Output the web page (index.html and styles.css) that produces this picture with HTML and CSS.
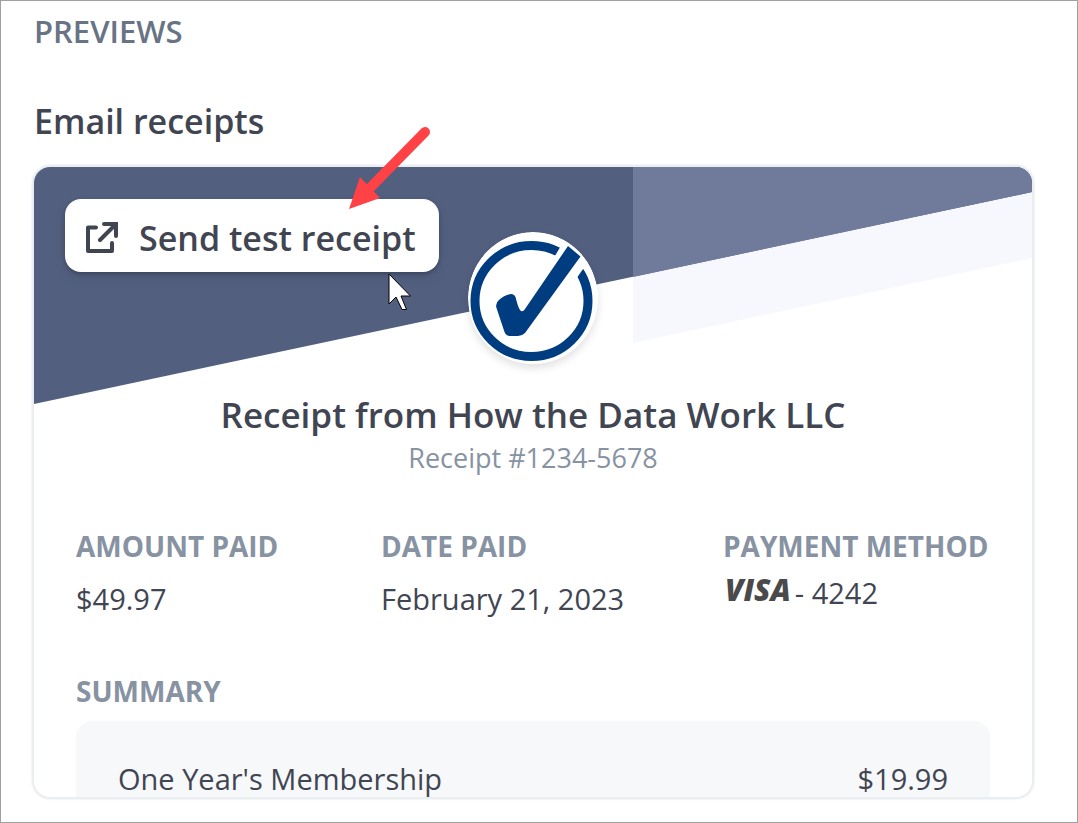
FILE: index.html
```html
<!DOCTYPE html>
<html lang="en">
<head>
    <meta charset="UTF-8">
    <title>Previews</title>
    <link rel="stylesheet" href="styles.css">
</head>
<body>
<main class="page">
    <h1 class="section-title">PREVIEWS</h1>
    <h2 class="preview-title">Email receipts</h2>
    <section class="card">
        <svg class="banner" viewBox="0 0 998 237" preserveAspectRatio="none" aria-hidden="true">
            <polygon class="stripe-light" points="599,0 998,0 998,91 599,176"/>
            <polygon class="stripe-dark" points="0,0 998,0 998,25 0,237"/>
            <polygon class="stripe-mid" points="599,0 998,0 998,25 599,110"/>
        </svg>
        <button class="send" type="button">
            <svg width="34" height="32" viewBox="0 0 34 32" fill="none" stroke="currentColor" stroke-width="4" stroke-linecap="round" aria-hidden="true">
                <path d="M11 5.500H3V29H27V21" stroke-linejoin="round"/>
                <path d="M19 2H31V14M31 2L15 18"/>
            </svg>
            Send test receipt
        </button>
        <svg class="logo" viewBox="0 0 130 132" aria-hidden="true">
            <ellipse cx="65" cy="66" rx="65" ry="66" fill="#fff"/>
            <ellipse cx="63.500" cy="69" rx="56.500" ry="55.500" fill="none" stroke="#003d80" stroke-width="9"/>
            <path d="M94 12L120 30L60 115L30 80L55 78Z" fill="#fff"/>
            <path d="M100 14L112.500 24.500L57 101Q54 104 50 104H42Q38 104 36.500 100L28.500 76Q27 71 31 68Q36 63 43 62Q46 62 47.500 65C49 70 50 76 53 79Q55 80 57 77Z" fill="#003d80"/>
        </svg>
        <h3 class="receipt-title">Receipt from How the Data Work LLC</h3>
        <p class="receipt-number">Receipt #1234-5678</p>
        <dl class="details">
            <div>
                <dt>AMOUNT PAID</dt>
                <dd>$49.97</dd>
            </div>
            <div>
                <dt>DATE PAID</dt>
                <dd>February 21, 2023</dd>
            </div>
            <div>
                <dt>PAYMENT METHOD</dt>
                <dd class="method"><span class="visa">VISA</span>- 4242</dd>
            </div>
        </dl>
        <h4 class="summary-title">SUMMARY</h4>
        <div class="summary">
            <span>One Year's Membership</span>
            <span>$19.99</span>
        </div>
    </section>
    <svg class="arrow" width="84" height="86" viewBox="0 0 84 86" aria-hidden="true">
        <path d="M77 7L20 65" stroke="#ff4245" stroke-width="10" stroke-linecap="round"/>
        <path d="M1 84L12 52L32 73Z" fill="#ff4245"/>
    </svg>
    <svg class="cursor" width="24" height="38" viewBox="0 0 24 38" aria-hidden="true">
        <path d="M1 1V31L8 24L14 36.500H18.500L13 23H22.500Z" fill="#fff" stroke="#000"/>
    </svg>
</main>
</body>
</html>
```
FILE: styles.css
```css
* {
    box-sizing: border-box;
    margin: 0;
    padding: 0;
}
body {
    font-family: "Segoe UI", "Open Sans", "Noto Sans", sans-serif;
    font-size: 29px;
    line-height: 40px;
    color: #414552;
    background: #fff;
}
.page {
    position: relative;
    min-height: 100vh;
    padding: 10px 43px 22px 31px;
    border: 1px solid #a0a0a0;
}
.section-title {
    font-size: 31px;
    font-weight: 600;
    color: #687385;
    padding-left: 2px;
}
.preview-title {
    font-size: 34px;
    font-weight: 600;
    line-height: 48px;
    margin: 46px 0 20px;
    padding-left: 2px;
}
.card {
    position: relative;
    height: 634px;
    overflow: hidden;
    display: flex;
    flex-direction: column;
    border: 2px solid #ebeef1;
    border-radius: 18px;
    box-shadow: 0 0 1px 1px #f4f6f8;
}
.card > * {
    flex-shrink: 0;
}
.banner {
    position: absolute;
    top: 0;
    left: 0;
    width: 100%;
    height: 237px;
}
.stripe-dark {
    fill: #525f7f;
}
.stripe-mid {
    fill: #707a9a;
}
.stripe-light {
    fill: #f7f8fe;
}
.send {
    position: relative;
    align-self: flex-start;
    display: flex;
    align-items: center;
    gap: 20px;
    height: 73px;
    margin: 32px 0 0 31px;
    padding: 4px 23px 0 20px;
    border: none;
    border-radius: 16px;
    font: inherit;
    font-size: 34px;
    font-weight: 600;
    color: #414552;
    background: #fff;
    box-shadow: 0 2px 4px rgba(0, 0, 0, .25), 0 6px 14px rgba(0, 0, 0, .06);
    cursor: pointer;
}
.logo {
    position: relative;
    align-self: center;
    width: 130px;
    height: 132px;
    margin-top: -40px;
    border-radius: 50%;
    box-shadow: 0 4px 8px rgba(0, 0, 0, .12);
}
.receipt-title {
    margin-top: 28px;
    font-size: 35px;
    font-weight: 600;
    line-height: 46px;
    text-align: center;
}
.receipt-number {
    font-size: 27px;
    color: #8792a2;
    text-align: center;
}
.details {
    display: grid;
    grid-template-columns: 305fr 342fr 267fr;
    margin: 48px 42px 0;
}
.details dt,
.summary-title {
    font-size: 28px;
    font-weight: 700;
    color: #8792a2;
    white-space: nowrap;
}
.details dd {
    margin-top: 13px;
}
.details .method {
    display: flex;
    margin-top: 7px;
}
.visa {
    margin: 0 4px 0 2px;
    font-size: 30px;
    font-weight: 800;
    font-style: italic;
    line-height: 34px;
    color: #4a4a4a;
}
.summary-title {
    margin: 52px 42px 10px;
}
.summary {
    display: flex;
    justify-content: space-between;
    margin: 0 42px;
    padding: 38px 42px;
    border-radius: 16px;
    background: #f6f8fa;
}
.arrow {
    position: absolute;
    top: 124px;
    left: 347px;
}
.cursor {
    position: absolute;
    top: 272px;
    left: 387px;
}
```
